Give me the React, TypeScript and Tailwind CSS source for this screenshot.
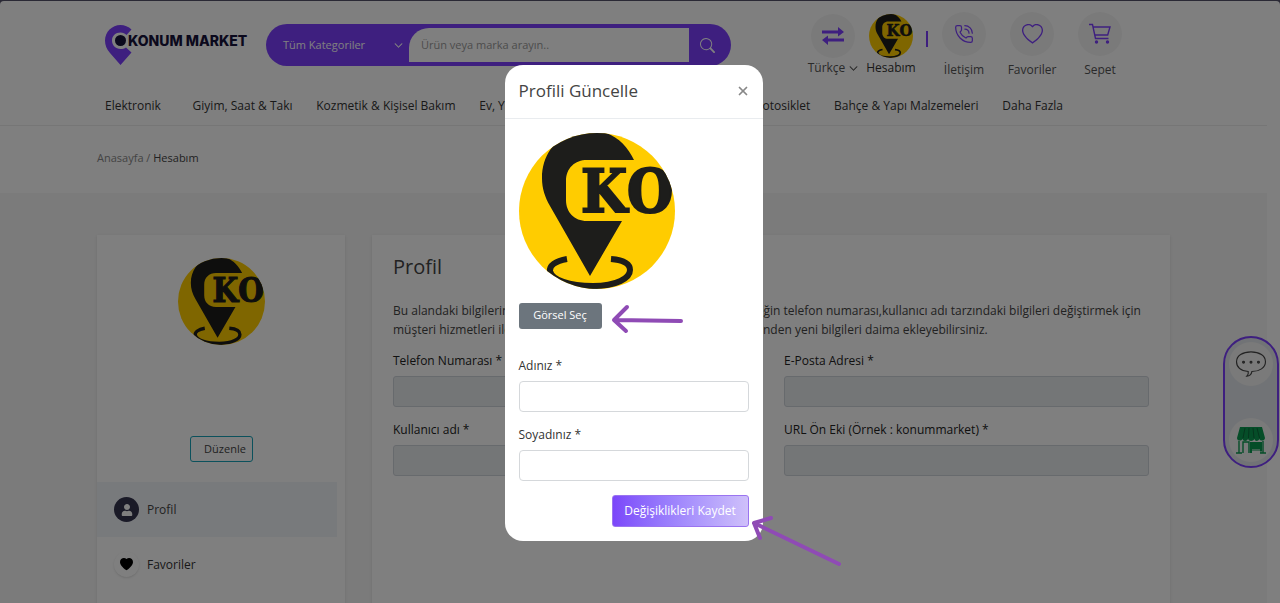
import { ReactNode, useId } from 'react'
import { BsHeart, BsHeartFill, BsSearch, BsChevronDown } from 'react-icons/bs'
import { FaUser } from 'react-icons/fa'
import { PhoneCall, X } from 'lucide-react'

const categories = [
    'Elektronik',
    'Giyim, Saat & Takı',
    'Kozmetik & Kişisel Bakım',
    'Ev, Yaşam, Kırtasiye & Ofis',
    'Otomobil Parça & Motosiklet',
    'Bahçe & Yapı Malzemeleri',
    'Daha Fazla',
]

const profileFields = ['Telefon Numarası *', 'E-Posta Adresi *', 'Kullanıcı adı *', 'URL Ön Eki (Örnek : konummarket) *']

function KoAvatar ({ className }: { className: string }) {
    const clip = useId()

    return (
        <svg viewBox="0 0 156 156" className={className} role="img" aria-label="KO">
            <clipPath id={clip}>
                <circle cx="78" cy="78" r="78" />
            </clipPath>
            <g clipPath={`url(#${clip})`}>
                <rect width="156" height="156" fill="#ffcc00" />
                <path d="M115 27C107 10 93 -2 72 -3C44 -3 23 16 23 45C23 56 26 64 31 73L71 143L103 88H68C55 88 47 79 47 67V48C47 35 56 27 68 27Z" fill="#1d1d1b" />
                <path d="M48 126C36 128 30 133 31 138C33 147 50 153 74 153C98 153 111 145 111 137C111 131 104 127 92 126" fill="none" stroke="#1d1d1b" strokeWidth="6" />
                <g fill="#1d1d1b" stroke="#1d1d1b" strokeWidth="2" fontFamily="'DejaVu Serif Condensed', 'DejaVu Serif', serif" fontWeight="700" fontSize="59">
                    <text x="62" y="79">K</text>
                    <text x="108" y="79">O</text>
                </g>
            </g>
        </svg>
    )
}

function Logo () {
    return (
        <a href="#" className="flex items-start text-[#17123a]">
            <svg viewBox="0 0 27 40" className="h-10 w-[27px]" aria-hidden="true">
                <path d="M26.5 4.5C23.500 1.500 19.500 0 15.500 0C7 0 0 7 0 15.500C0 20 1.500 24 5 28L15.500 40L26.500 27.500L21 22.500C19.500 23.500 17.500 24 15.500 24C10.500 24 7 20 7 15.500C7 11 10.500 7.500 15.500 7.500C18 7.500 20 8.500 21.500 10Z" fill="#7c3fff" />
                <circle cx="15.500" cy="15.500" r="5.500" fill="currentColor" />
            </svg>
            <span className="mt-[6px] -ml-1 font-['Inter',sans-serif] text-[14px] leading-5 font-extrabold whitespace-nowrap">KONUM MARKET</span>
        </a>
    )
}

function SwapIcon () {
    return (
        <svg viewBox="0 0 22 18" className="h-[18px] w-[22px]" fill="currentColor" aria-hidden="true">
            <path d="M0 3.500H16V0L22 5L16 9.500V6.500H0ZM22 11.500H6V8.500L0 13L6 18V14.500H22Z" />
        </svg>
    )
}

function CartIcon () {
    return (
        <svg viewBox="0 0 24 22" className="h-[22px] w-6" fill="none" stroke="currentColor" strokeWidth="1.400" aria-hidden="true">
            <path d="M1 1.500H4.500L7.500 15.500H20.500M5.200 4H22L19.700 12H6.800" />
            <circle cx="8.500" cy="19" r="1" fill="currentColor" />
            <circle cx="19.500" cy="19" r="1" fill="currentColor" />
        </svg>
    )
}

function ChatIcon () {
    return (
        <svg viewBox="0 0 34 30" className="h-7 w-8" fill="none" stroke="#444" strokeWidth="1.200" aria-hidden="true">
            <path d="M14 23C6 22 1.500 18 1.500 12.500C1.500 6 8 2 17 2S32.500 6 32.500 12.500S26 23 18 23C17.500 26 15.500 28 12.500 28C14 26.500 14.500 25 14 23Z" />
            <g fill="#777">
                <circle cx="9" cy="13" r="1" />
                <circle cx="17" cy="13" r="1" />
                <circle cx="25" cy="13" r="1" />
            </g>
        </svg>
    )
}

function StoreIcon () {
    return (
        <svg viewBox="0 0 30 28" className="h-7 w-[30px]" aria-hidden="true">
            <path d="M4 1H26L29 12C29 15 24 15.500 23.500 13C22 15.500 19 15.500 18.500 13C17 15.500 13 15.500 12 13C11 15.500 7 15.500 6.500 13C5 15.500 1 15 1 12Z" fill="#0a9a50" />
            <path d="M9 2L7 12M13 2L12.500 12M17 2L18 12M21 2L23.500 12" stroke="#0b6b3b" />
            <path d="M3 15V27M27 15V27M0 27H6M24 27H30M7 27V16H13V27" stroke="#0a9a50" strokeWidth="1.400" fill="none" />
            <path d="M14 16H26V25H24V23H16V27H14Z" fill="#0a9a50" />
            <path d="M15 24H25V27" stroke="#0a9a50" fill="none" />
        </svg>
    )
}

function HeaderAction ({ label, children }: { label: string, children: ReactNode }) {
    return (
        <a href="#" className="flex w-[68px] flex-col items-center gap-1 text-[#555]">
            <span className="flex size-11 items-center justify-center rounded-full bg-[#f5f5f5] text-[#7c3fff]">{children}</span>
            <span className="leading-5">{label}</span>
        </a>
    )
}

function Header () {
    return (
        <header className="border-b border-[#ececec]">
            <div className="mx-auto flex max-w-[1073px] items-start pt-[11px] pl-2">
                <div className="mt-[13px] w-[161px] shrink-0">
                    <Logo />
                </div>
                <form className="mt-3 flex h-[42px] w-[465px] shrink-0 overflow-hidden rounded-full bg-[#7c3fff] text-white">
                    <button type="button" className="flex w-[143px] items-center justify-between pr-[6px] pl-[17px] text-[11px]">
                        Tüm Kategoriler
                        <BsChevronDown className="size-[9px] stroke-1" />
                    </button>
                    <input aria-label="Ürün ara" placeholder="Ürün veya marka arayın.." className="my-1 min-w-0 flex-1 rounded-tl-[20px] bg-white px-3 text-[11px] placeholder:text-[#999]" />
                    <button type="button" aria-label="Ara" className="flex w-[42px] items-center pl-[11px]">
                        <BsSearch className="size-[15px]" />
                    </button>
                </form>
                <div className="ml-auto flex items-start">
                    <div className="mt-[2px] flex w-[58px] flex-col items-center">
                        <span className="flex size-11 items-center justify-center rounded-full bg-[#f5f5f5] text-[#7c3fff]"><SwapIcon /></span>
                        <button type="button" className="flex items-center gap-1 leading-5 text-[#555]">
                            Türkçe <BsChevronDown className="size-[9px] stroke-1" />
                        </button>
                    </div>
                    <a href="#" className="mt-[2px] flex w-[58px] flex-col items-center text-[#333]">
                        <KoAvatar className="size-11" />
                        <span className="leading-5">Hesabım</span>
                    </a>
                    <span className="mt-[19px] mr-[2px] ml-[6px] h-4 w-[2px] bg-[#7c3fff]" />
                    <div className="flex">
                        <HeaderAction label="İletişim"><PhoneCall className="size-5" strokeWidth={1.5} /></HeaderAction>
                        <HeaderAction label="Favoriler"><BsHeart className="size-[21px]" /></HeaderAction>
                        <HeaderAction label="Sepet"><CartIcon /></HeaderAction>
                    </div>
                    <span className="w-9" />
                </div>
            </div>
            <nav className="mx-auto max-w-[1073px] pt-4 pb-[9px]">
                <ul className="mr-[107px] ml-2 flex justify-between">
                    {categories.map((category) => (
                        <li key={category} className="first:mr-2">
                            <a href="#" className="leading-5 whitespace-nowrap text-[#333]">{category}</a>
                        </li>
                    ))}
                </ul>
            </nav>
        </header>
    )
}

function Sidebar () {
    return (
        <aside className="flex w-[248px] shrink-0 flex-col bg-white pt-[23px] shadow-sm">
            <KoAvatar className="size-[87px] self-center" />
            <button type="button" className="mt-[91px] h-[26px] w-[63px] self-center rounded-[3px] border border-[#17a2b8] pl-2 text-[11px] text-[#444]">Düzenle</button>
            <ul className="mt-5 mr-2">
                <li>
                    <a href="#" className="flex h-[55px] items-center gap-2 bg-[#f1f4f9] pl-[17px] text-[#444]">
                        <span className="flex size-[25px] items-center justify-center rounded-full bg-[#34344e] text-white"><FaUser className="size-3" /></span>
                        Profil
                    </a>
                </li>
                <li>
                    <a href="#" className="flex h-[55px] items-center gap-2 pl-[17px] text-[#333]">
                        <span className="flex size-[25px] items-center justify-center rounded-full bg-white text-black shadow-sm"><BsHeartFill className="size-[13px]" /></span>
                        Favoriler
                    </a>
                </li>
            </ul>
        </aside>
    )
}

function ProfilePanel () {
    return (
        <main className="flex-1 bg-white px-[21px] pt-[18px] shadow-sm">
            <h1 className="text-[20px] leading-7 text-[#444]">Profil</h1>
            <p className="mt-5 leading-[19px] text-[#444]">
                Bu alandaki bilgilerin bir kısmını kendiniz güncelleyemezsiniz, örneğin telefon numarası,kullanıcı adı tarzındaki bilgileri değiştirmek için
                müşteri hizmetleri ile iletişime geçebilirsiniz. Adres defteri sekmesinden yeni bilgileri daima ekleyebilirsiniz.
            </p>
            <form className="mt-3 grid grid-cols-2 gap-x-[26px] gap-y-[13px]">
                {profileFields.map((field) => (
                    <label key={field} className="flex flex-col gap-[5px] leading-5 text-[#222]">
                        {field}
                        <input disabled className="h-[31px] rounded-[3px] border border-[#ced4da] bg-[#e9ecef] px-3" />
                    </label>
                ))}
            </form>
        </main>
    )
}

function SupportDock () {
    return (
        <div className="fixed top-[336px] right-px flex h-[132px] flex-col justify-between rounded-full border-2 border-[#7c3fff] bg-[#e3e7ec] px-1 py-1">
            <button type="button" aria-label="Canlı destek" className="flex size-11 items-center justify-center rounded-full bg-[#f4f4f4]"><ChatIcon /></button>
            <button type="button" aria-label="Mağaza" className="flex size-11 items-center justify-center rounded-full bg-[#f4f4f4]"><StoreIcon /></button>
        </div>
    )
}

function ProfileModal () {
    return (
        <div role="dialog" aria-modal="true" aria-labelledby="modal-title" className="relative w-[258px] rounded-[18px] bg-white text-[#333]">
            <div className="flex h-[54px] items-center justify-between border-b border-[#e9ecef] px-[14px]">
                <h2 id="modal-title" className="text-[17px] leading-6 text-[#444]">Profili Güncelle</h2>
                <button type="button" aria-label="Kapat" className="-mr-px text-[#888]"><X className="size-[14px]" strokeWidth={3} /></button>
            </div>
            <form className="flex flex-col p-[14px]">
                <KoAvatar className="size-[156px]" />
                <button type="button" className="mt-[14px] h-[26px] w-[83px] rounded-[3px] bg-[#6c757d] text-[11px] font-medium text-white">Görsel Seç</button>
                <label className="mt-[27px] flex flex-col gap-[5px] leading-5">
                    Adınız *
                    <input className="h-[31px] rounded-[4px] border border-[#d5d8db] px-3" />
                </label>
                <label className="mt-[13px] flex flex-col gap-[5px] leading-5">
                    Soyadınız *
                    <input className="h-[31px] rounded-[4px] border border-[#d5d8db] px-3" />
                </label>
                <button type="submit" className="mt-[14px] h-8 w-[137px] self-end rounded-[3px] border border-[#9a74f0] bg-linear-to-r from-[#7c46fa] to-[#cfc0fa] whitespace-nowrap text-white">Değişiklikleri Kaydet</button>
            </form>
            <svg viewBox="0 0 76 32" className="absolute top-[238px] left-[106px] h-8 w-[76px]" fill="none" stroke="#8f4bb5" strokeWidth="4" strokeLinecap="round" strokeLinejoin="round" aria-hidden="true">
                <path d="M70 18L4 17M16 4L3 17L15 28" />
            </svg>
            <svg viewBox="0 0 96 56" className="absolute top-[448px] left-[244px] h-14 w-24" fill="none" stroke="#8f4bb5" strokeWidth="4" strokeLinecap="round" strokeLinejoin="round" aria-hidden="true">
                <path d="M90 51L5 10M22 5L5 10L11 25" />
            </svg>
        </div>
    )
}

function App () {
    return (
        <div className="bg-[#55536a] pt-px font-['Open_Sans',sans-serif] text-[12px]">
            <div className="flex min-h-[calc(100vh-1px)] flex-col rounded-t-[4px] bg-white">
                <div className="flex flex-1 flex-col pr-[13px]">
                    <Header />
                    <div className="mx-auto w-full max-w-[1073px] pt-[22px] pb-[25px] text-[11px] leading-5 text-[#888]">
                        <a href="#">Anasayfa</a> / <span className="text-[#444]">Hesabım</span>
                    </div>
                    <div className="flex flex-1 bg-[#f6f6f6] pt-[42px]">
                        <div className="mx-auto flex w-full max-w-[1073px] gap-[27px]">
                            <Sidebar />
                            <ProfilePanel />
                        </div>
                    </div>
                </div>
            </div>
            <SupportDock />
            <div className="fixed inset-0 flex items-center justify-center bg-black/50 pt-[2px] pr-[13px]">
                <ProfileModal />
            </div>
        </div>
    )
}

export default App
